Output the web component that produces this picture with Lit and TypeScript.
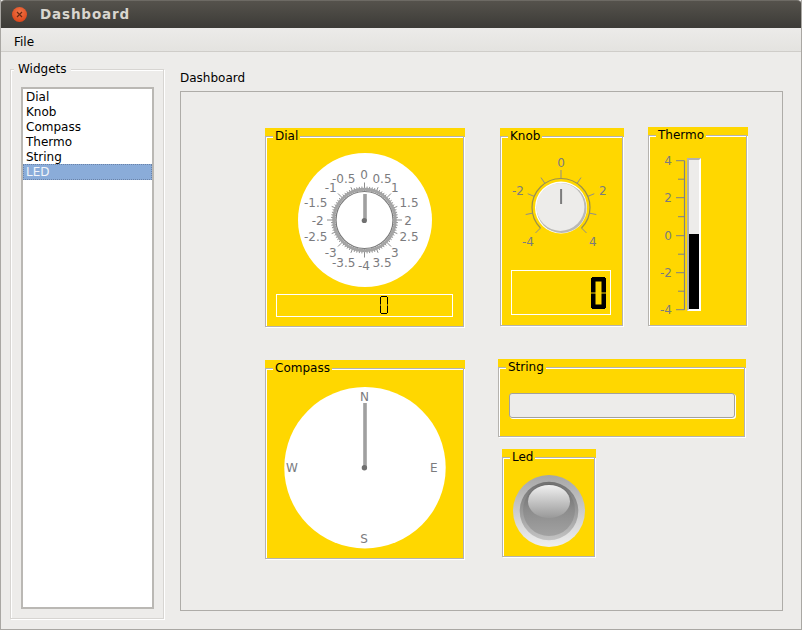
import { LitElement, html, css, svg } from "lit";
import { customElement } from "lit/decorators.js";

const dialLabels: [string, number, number][] = [
  ["0", 364, 175], ["0.5", 382, 179], ["1", 394.7, 188], ["1.5", 409, 203], ["2", 408, 220.7],
  ["2.5", 409, 237], ["3", 394.7, 252.7], ["3.5", 382, 262.7], ["-4", 364, 265.7], ["-3.5", 343.7, 262.7],
  ["-3", 330.7, 252.7], ["-2.5", 315.7, 237], ["-2", 317.7, 220.7], ["-1.5", 315.7, 203], ["-1", 330.7, 188], ["-0.5", 343.7, 179],
];

function polar(cx: number, cy: number, r: number, deg: number) {
  const a = (deg * Math.PI) / 180;
  return [cx + r * Math.sin(a), cy - r * Math.cos(a)];
}
function tick(cx: number, cy: number, r1: number, r2: number, deg: number) {
  const [x1, y1] = polar(cx, cy, r1, deg);
  const [x2, y2] = polar(cx, cy, r2, deg);
  return svg`<line x1=${x1} y1=${y1} x2=${x2} y2=${y2}></line>`;
}

const GX = 265, GY = 128;

@customElement("app-root")
export class AppRoot extends LitElement {
  static styles = css`
    :host { display: block; width: 802px; height: 630px; font-family: "DejaVu Sans", sans-serif; font-size: 12px; color: #000; }
    * { box-sizing: border-box; }
    .window { width: 802px; height: 630px; background: #edecea; display: flex; flex-direction: column; border: solid #a9a7a3; border-width: 0 1px 1px 1px; overflow: hidden; }
    .titlebar { height: 28px; margin: 0 -1px; flex: none; display: flex; align-items: center; gap: 13px; padding: 0 0 0 12px; background: linear-gradient(#55524c, #3c3b37); border-top: 1px solid #6d6a64; border-radius: 5px 5px 0 0; color: #d9d6cf; font-weight: 700; font-size: 13.5px; letter-spacing: 0.85px; }
    .title-text { margin-bottom: 2px; }
    .close { width: 15px; height: 15px; flex: none; border-radius: 50%; background: radial-gradient(circle at 50% 35%, #f2774a, #dd481c 75%); display: flex; align-items: center; justify-content: center; }
    .menubar { height: 24px; flex: none; background: linear-gradient(#ecebe9, #e4e3e0); border-bottom: 1px solid #cfcdc9; padding: 5px 0 0 13px; display: flex; align-items: center; }
    .main { flex: 1; display: flex; min-height: 0; padding: 17px 18px 10px 9px; gap: 16px; }
    .side { width: 154px; flex: none; position: relative; border: 1px solid #d7d5d2; box-shadow: inset 1px 1px 0 #fff, 1px 1px 0 #fff; padding: 17px 9px 10px 10px; height: 550px; }
    .side-title { position: absolute; left: 3px; top: -8px; padding: 0 4px; background: #edecea; line-height: 15px; }
    .list { height: 522px; width: 133px; background: #fff; border: 2px solid #bab8b4; line-height: 15px; }
    .item { height: 15px; padding: 1px 0 0 3px; }
    .item.sel { height: 16px; background: #8aacd9; color: #f2f5fa; outline: 1px dotted #6b83a8; outline-offset: -1px; }
    .dash { flex: 1; display: flex; flex-direction: column; min-width: 0; }
    .dash-title { height: 22px; padding-top: 1px; line-height: 16px; }
    .canvas { position: relative; border: 1px solid #aeaca8; height: 520px; flex: none; }
    .group { position: absolute; }
    .band { position: absolute; left: 0; right: 0; top: 0; height: 9px; background: #ffd700; }
    .frame { position: absolute; left: 0; right: 1px; top: 8px; bottom: 0; background: #ffd700; border: 1px solid #b5b3af; box-shadow: inset 1px 1px 0 #fff, 1px 1px 0 #fff; }
    .gtitle { position: absolute; left: 8px; top: 1px; padding: 0 2px; background: #ffd700; line-height: 15px; white-space: nowrap; z-index: 1; }
    svg.art { position: absolute; left: 0; top: 0; overflow: visible; z-index: 1; }
    .lbl { font-family: "DejaVu Sans", sans-serif; font-size: 12px; fill: #7b7b7e; text-anchor: middle; dominant-baseline: central; }
    .end { text-anchor: end; }
    .ticks line { stroke: #8d8d8d; stroke-width: 1; }
    .input { position: absolute; left: 11px; top: 34px; width: 226px; height: 25px; background: #edecea; border: 1px solid #a3a19d; border-radius: 3px; box-shadow: 1px 1px 0 #fff; z-index: 1; }
    .tube { position: absolute; left: 39px; top: 31px; width: 14px; height: 153px; background: #edecea; border: solid; border-color: #b3b1ad #fff #fff #b3b1ad; border-width: 2px; z-index: 1; display: flex; flex-direction: column; justify-content: flex-end; }
    .fill { background: #000; height: 75px; }
  `;

  private group(title: string, x: number, y: number, w: number, h: number, inner: unknown) {
    return html`<div class="group" style="left:${x - 181}px;top:${y - 92}px;width:${w}px;height:${h}px">
      <div class="band"></div><div class="frame"></div>
      <div class="gtitle">${title}</div>${inner}
    </div>`;
  }

  /* seven-segment display zero, six separate segments */
  private lcdSegments(x: number, y: number, w: number, h: number, t: number) {
    const mid = h / 2;
    return svg`<g transform="translate(${x} ${y})" fill="#000">
      <rect x="1" y="0" width=${w - 2} height=${t}></rect>
      <rect x="1" y=${h - t} width=${w - 2} height=${t}></rect>
      <rect x="0" y="1" width=${t} height=${mid - 1.5}></rect>
      <rect x=${w - t} y="1" width=${t} height=${mid - 1.5}></rect>
      <rect x="0" y=${mid + 0.5} width=${t} height=${mid - 1.5}></rect>
      <rect x=${w - t} y=${mid + 0.5} width=${t} height=${mid - 1.5}></rect>
    </g>`;
  }

  private dial() {
    const ox = GX, oy = GY;
    const cx = 364.5 - ox, cy = 220 - oy;
    const ticks = [];
    for (let i = 0; i < 80; i++) {
      const deg = i * 4.5;
      const major = i % 10 === 0;
      const mid = i % 5 === 0;
      ticks.push(tick(cx, cy, 29, major ? 37.5 : mid ? 35.5 : 33.5, deg));
    }
    return html`<svg class="art" width="200" height="199" viewBox="0 0 200 199">
      <circle cx=${365 - ox} cy=${220 - oy} r="67" fill="#fff"></circle>
      <g class="ticks">${ticks}</g>
      <circle cx=${cx} cy=${cy} r="30.8" fill="none" stroke="#a4a4a4" stroke-width="3"></circle>
      <circle cx=${cx} cy=${cy} r="28.5" fill="#fff" stroke="#7a7a7a" stroke-width="1.2"></circle>
      <rect x=${363.2 - ox} y=${194 - oy} width="3.6" height="26" fill="#a0a0a0"></rect>
      <circle cx=${cx - 0.2} cy=${cy + 0.5} r="2.6" fill="#707070"></circle>
      ${dialLabels.map(([t, x, y]) => svg`<text class="lbl" x=${x - ox} y=${y - oy}>${t}</text>`)}
      <rect x="11.5" y="166.5" width="176" height="22" fill="none" stroke="#fff"></rect>
      <g fill="#000">
        <rect x="116" y="168" width="6" height="1"></rect>
        <rect x="116" y="185" width="6" height="1"></rect>
        <rect x="115" y="169" width="1" height="7.5"></rect>
        <rect x="122" y="169" width="1" height="7.5"></rect>
        <rect x="115" y="177.5" width="1" height="7.5"></rect>
        <rect x="122" y="177.5" width="1" height="7.5"></rect>
      </g>
    </svg>`;
  }

  private knob() {
    const ox = 500, oy = GY;
    const cx = 561 - ox, cy = 207.5 - oy;
    const angs = [-135, -101.25, -67.5, -33.75, 0, 33.75, 67.5, 101.25, 135];
    const [ax, ay] = polar(cx, cy, 29, -135);
    const [bx, by] = polar(cx, cy, 29, 135);
    return html`<svg class="art" width="124" height="199" viewBox="0 0 124 199">
      <path d="M${ax} ${ay}A29 29 0 1 1 ${bx} ${by}" fill="none" stroke="#9a8f4e" stroke-width="1.2"></path>
      <g class="ticks">${angs.map((d) => tick(cx, cy, 29, d === 0 ? 37.5 : 36, d))}</g>
      <circle cx=${cx} cy=${cy} r="26" fill="#fff"></circle>
      <circle cx=${cx + 0.5} cy=${cy + 0.5} r="25" fill="#b9b8b5"></circle>
      <circle cx=${cx - 0.6} cy=${cy - 0.6} r="24" fill="#edecea"></circle>
      <rect x=${cx - 0.9} y=${189 - oy} width="2" height="15" fill="#7c7c7c"></rect>
      <text class="lbl" x=${561 - ox} y=${162.5 - oy}>0</text>
      <text class="lbl" x=${518 - ox} y=${190.7 - oy}>-2</text>
      <text class="lbl" x=${602.7 - ox} y=${190.7 - oy}>2</text>
      <text class="lbl" x=${528 - ox} y=${242 - oy}>-4</text>
      <text class="lbl" x=${592.7 - ox} y=${242 - oy}>4</text>
      <rect x="11.5" y="142.5" width="99" height="44" fill="none" stroke="#fff"></rect>
      ${this.lcdSegments(91, 149, 15, 32, 4.5)}
    </svg>`;
  }

  private thermo() {
    const oy = 127;
    const ys = [160.7, 179.2, 197.7, 216.7, 235.7, 254.2, 272.7, 291.2, 309.7];
    const labels: [string, number][] = [["4", 0], ["2", 2], ["0", 4], ["-2", 6], ["-4", 8]];
    return html`<svg class="art" width="100" height="199" viewBox="0 0 100 199">
      <path d="M36.5 ${ys[0] - oy}V${ys[8] - oy}" stroke="#7f8086" stroke-width="1.2" fill="none"></path>
      ${ys.map((y, i) => svg`<line x1=${i % 2 ? 30 : 28} x2="36.5" y1=${y - oy} y2=${y - oy} stroke="#7f8086" stroke-width="1"></line>`)}
      ${labels.map(([t, i]) => svg`<text class="lbl end" x="24" y=${ys[i] - oy}>${t}</text>`)}
    </svg>
    <div class="tube"><div class="fill"></div></div>`;
  }

  private compass() {
    const ox = GX, oy = 360;
    return html`<svg class="art" width="200" height="199" viewBox="0 0 200 199">
      <circle cx=${365 - ox} cy=${467.7 - oy} r="80.7" fill="#fff"></circle>
      <rect x=${363.2 - ox} y=${403 - oy} width="3.6" height="65" fill="#a0a0a0"></rect>
      <circle cx=${364.4 - ox} cy=${467.7 - oy} r="2.7" fill="#707070"></circle>
      <text class="lbl" x=${364.5 - ox} y=${396.7 - oy}>N</text>
      <text class="lbl" x=${364 - ox} y=${538.7 - oy}>S</text>
      <text class="lbl" x=${433.7 - ox} y=${467.7 - oy}>E</text>
      <text class="lbl" x=${292 - ox} y=${467.7 - oy}>W</text>
    </svg>`;
  }

  private led() {
    return html`<svg class="art" width="94" height="108" viewBox="0 0 94 108">
      <defs>
        <linearGradient id="l1" x1="0" y1="0" x2="0" y2="1"><stop offset="0" stop-color="#a6a6a6"></stop><stop offset="1" stop-color="#f0f0f0"></stop></linearGradient>
        <linearGradient id="l2" x1="0" y1="0" x2="0" y2="1"><stop offset="0" stop-color="#707070"></stop><stop offset="1" stop-color="#c4c4c4"></stop></linearGradient>
        <linearGradient id="l3" x1="0" y1="0" x2="0" y2="1"><stop offset="0" stop-color="#6a6a6a"></stop><stop offset="0.5" stop-color="#8c8c8c"></stop><stop offset="1" stop-color="#a2a2a2"></stop></linearGradient>
        <linearGradient id="l4" x1="0" y1="0" x2="0" y2="1"><stop offset="0" stop-color="#f0f0f0"></stop><stop offset="1" stop-color="#999"></stop></linearGradient>
      </defs>
      <circle cx="47" cy="62" r="36" fill="url(#l1)"></circle>
      <circle cx="47" cy="62" r="29.3" fill="url(#l2)"></circle>
      <circle cx="47" cy="61" r="26" fill="url(#l3)"></circle>
      <ellipse cx="47" cy="52.5" rx="21" ry="16.5" fill="url(#l4)"></ellipse>
    </svg>`;
  }

  render() {
    return html`<div class="window">
      <div class="titlebar">
        <div class="close"><svg width="7" height="7" viewBox="0 0 7 7"><path d="M1 1L6 6M6 1L1 6" stroke="#6b2a12" stroke-width="1.2"></path></svg></div>
        <span class="title-text">Dashboard</span>
      </div>
      <div class="menubar">File</div>
      <div class="main">
        <div class="side">
          <div class="side-title">Widgets</div>
          <div class="list">
            ${["Dial", "Knob", "Compass", "Thermo", "String"].map((t) => html`<div class="item">${t}</div>`)}
            <div class="item sel">LED</div>
          </div>
        </div>
        <div class="dash">
          <div class="dash-title">Dashboard</div>
          <div class="canvas">
            ${this.group("Dial", 265, 128, 200, 199, this.dial())}
            ${this.group("Knob", 500, 128, 124, 198, this.knob())}
            ${this.group("Thermo", 648, 127, 100, 199, this.thermo())}
            ${this.group("Compass", 265, 360, 200, 199, this.compass())}
            ${this.group("String", 498, 359, 248, 78, html`<div class="input"></div>`)}
            ${this.group("Led", 502, 449, 94, 108, this.led())}
          </div>
        </div>
      </div>
    </div>`;
  }
}
